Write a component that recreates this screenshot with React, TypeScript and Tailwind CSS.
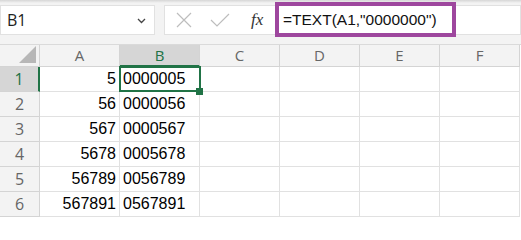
const cols = ['A', 'B', 'C', 'D', 'E', 'F'];

const rows = [
  { a: '5', b: '0000005' },
  { a: '56', b: '0000056' },
  { a: '567', b: '0000567' },
  { a: '5678', b: '0005678' },
  { a: '56789', b: '0056789' },
  { a: '567891', b: '0567891' },
];

const cellFont = { fontFamily: '"Liberation Sans", Arial, sans-serif' };
const uiFont = { fontFamily: '"Open Sans", "Noto Sans", sans-serif' };

const FormulaBar = () => (
  <div className="relative h-[45px] bg-[#f3f3f3] border-b border-[#dadada]">
    <div className="h-[3px] bg-gradient-to-b from-[#d6d6d6] to-[#f3f3f3]" />
    <div className="flex items-start">
      {/* name box */}
      <div className="mt-[2px] flex h-[30px] w-[155px] items-center justify-between border border-[#e1e1e1] bg-white pl-[6px] pr-[8px]">
        <span className="text-[16px] text-[#222]" style={uiFont}>B1</span>
        <svg width="9" height="6" viewBox="0 0 9 6" className="mt-[2px]">
          <path d="M1 1 L4.5 4.5 L8 1" fill="none" stroke="#444" strokeWidth="1.3" />
        </svg>
      </div>
      {/* cancel / enter / fx */}
      <div className="ml-[9px] mt-[2px] flex h-[30px] w-[111px] items-center border-y border-l border-[#e1e1e1] bg-white">
        <svg width="16" height="16" viewBox="0 0 16 16" className="ml-[11px]">
          <path d="M1 1 L15 15 M15 1 L1 15" stroke="#bdbdbd" strokeWidth="1.2" />
        </svg>
        <svg width="20" height="14" viewBox="0 0 20 14" className="ml-[18px]">
          <path d="M1 7 L7 13 L19 1" fill="none" stroke="#bdbdbd" strokeWidth="1.2" />
        </svg>
        <span
          className="ml-[21px] text-[17px] italic text-[#333]"
          style={{ fontFamily: '"Liberation Serif", "Times New Roman", serif' }}
        >
          fx
        </span>
      </div>
      {/* formula */}
      <div className="flex h-[35px] w-[181px] -mt-[1px] items-center border-[4px] border-[#9e479e] bg-white pl-[4px]">
        <span className="text-[15.5px] text-[#111]" style={cellFont}>=TEXT(A1,"0000000")</span>
      </div>
      <div className="mt-[2px] h-[30px] flex-1 border-y border-r border-[#e1e1e1] bg-white" />
    </div>
  </div>
);

const Sheet = () => (
  <div className="grid grid-cols-[40px_repeat(6,80px)] bg-white">
    {/* header row */}
    <div className="relative h-[22px] border-r border-b border-[#d4d4d4] bg-[#f3f3f3]">
      <svg width="17" height="17" viewBox="0 0 17 17" className="absolute right-[3px] bottom-[3px]">
        <path d="M17 0 L17 17 L0 17 Z" fill="#b7b7b7" />
      </svg>
    </div>
    {cols.map((c) => (
      <div
        key={c}
        className={`flex h-[22px] items-center justify-center border-r border-[#d4d4d4] text-[15px] ${
          c === 'B' ? 'bg-[#d6d6d6] text-[#217346] border-b-2 border-b-[#217346]' : 'bg-[#f3f3f3] text-[#666] border-b'
        }`}
        style={uiFont}
      >
        {c}
      </div>
    ))}
    {rows.map((r, i) => (
      <Row key={i} n={i + 1} a={r.a} b={r.b} />
    ))}
  </div>
);

const Row = ({ n, a, b }: { n: number; a: string; b: string }) => {
  const selected = n === 1;
  return (
    <>
      <div
        className={`flex h-[25px] items-center justify-center border-b border-[#d4d4d4] text-[16px] ${
          selected ? 'bg-[#d6d6d6] text-[#217346] border-r-2 border-r-[#217346]' : 'bg-[#f3f3f3] text-[#666] border-r'
        }`}
        style={uiFont}
      >
        {n}
      </div>
      <div
        className="flex h-[25px] items-center justify-end border-r border-b border-[#e1e1e1] pr-[3px] text-[16px] text-black"
        style={cellFont}
      >
        {a}
      </div>
      <div
        className="relative flex h-[25px] items-center border-r border-b border-[#e1e1e1] pl-[3px] text-[16px] text-black"
        style={cellFont}
      >
        {b}
        {selected && (
          <>
            <div className="pointer-events-none absolute -left-[1px] -top-[1px] z-10 h-[26px] w-[82px] border-2 border-[#217346]" />
            <div className="absolute -right-[4px] -bottom-[4px] z-10 h-[7px] w-[7px] bg-[#217346]" />
          </>
        )}
      </div>
      {[0, 1, 2, 3].map((k) => (
        <div key={k} className="h-[25px] border-r border-b border-[#e1e1e1]" />
      ))}
    </>
  );
};

export default function App() {
  return (
    <div className="h-[218px] w-[521px] overflow-hidden bg-white">
      <FormulaBar />
      <Sheet />
    </div>
  );
}
